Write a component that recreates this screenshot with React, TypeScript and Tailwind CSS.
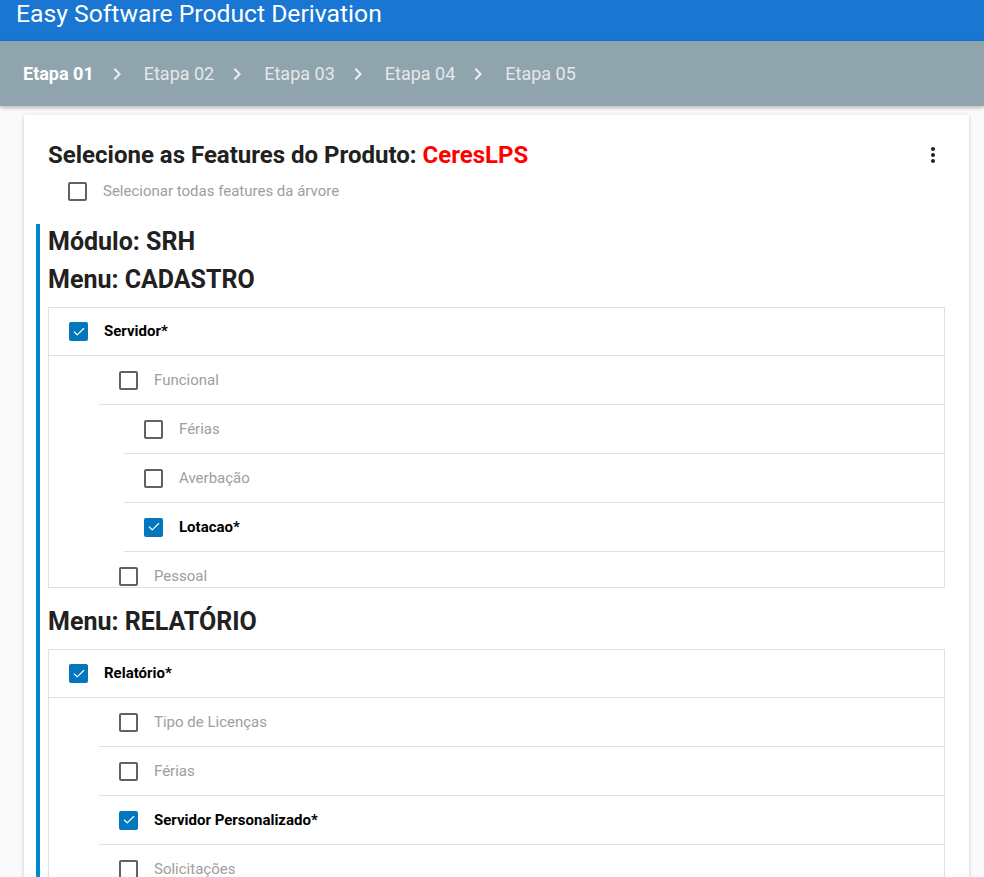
import { Check } from "lucide-react";

type Node = {
  label: string;
  checked?: boolean;
  indent: number;
};

const cadastro: Node[] = [
  { label: "Servidor*", checked: true, indent: 0 },
  { label: "Funcional", indent: 50 },
  { label: "Férias", indent: 75 },
  { label: "Averbação", indent: 75 },
  { label: "Lotacao*", checked: true, indent: 75 },
  { label: "Pessoal", indent: 50 },
];

const relatorio: Node[] = [
  { label: "Relatório*", checked: true, indent: 0 },
  { label: "Tipo de Licenças", indent: 50 },
  { label: "Férias", indent: 50 },
  { label: "Servidor Personalizado*", checked: true, indent: 50 },
  { label: "Solicitações", indent: 50 },
];

const steps = ["Etapa 01", "Etapa 02", "Etapa 03", "Etapa 04", "Etapa 05"];

function Box({ checked }: { checked?: boolean }) {
  if (checked) {
    return (
      <span className="flex h-[19px] w-[19px] shrink-0 items-center justify-center rounded-[2px] bg-[#0277bd]">
        <Check className="h-[14px] w-[14px] text-white" strokeWidth={2} />
      </span>
    );
  }
  return <span className="h-[19px] w-[19px] shrink-0 rounded-[2px] border-2 border-[#616161]" />;
}

function Row({ node }: { node: Node }) {
  return (
    <div
      className={
        node.indent === 0
          ? "flex h-[48px] items-center border-b border-[#e0e0e0] pl-[20px]"
          : node.indent === 50
            ? "ml-[50px] flex h-[49px] items-center border-b border-[#e0e0e0] pl-[20px]"
            : "ml-[75px] flex h-[49px] items-center border-b border-[#e0e0e0] pl-[20px]"
      }
    >
      <Box checked={node.checked} />
      <span
        className={
          node.checked
            ? "ml-[16px] text-[15px] font-bold text-black"
            : "ml-[16px] text-[15px] text-[#9e9e9e]"
        }
      >
        {node.label}
      </span>
    </div>
  );
}

function Tree({ nodes }: { nodes: Node[] }) {
  return (
    <div className="mr-[24px] h-[281px] overflow-hidden border border-[#e0e0e0] bg-white">
      {nodes.map((n, i) => (
        <Row key={i} node={n} />
      ))}
    </div>
  );
}

export default function App() {
  return (
    <div className="min-h-[877px] overflow-hidden bg-[#fafafa] font-['Roboto',sans-serif]">
      <header className="flex h-[41px] items-end bg-[#1976d2] px-[16px] pb-[14px]">
        <span className="text-[24.7px] leading-none text-white">Easy Software Product Derivation</span>
      </header>
      <nav className="flex h-[65px] items-center bg-[#90a4ae] pl-[23px] shadow-[0_2px_4px_rgba(0,0,0,0.25)]">
        {steps.map((s, i) => (
          <div key={s} className="flex items-center">
            {i > 0 && (
              <svg viewBox="0 0 24 24" className="ml-[11px] mr-[15px] h-[24px] w-[24px] fill-[#eceff1]">
                <path d="M10 6 8.59 7.41 13.17 12l-4.58 4.59L10 18l6-6z" />
              </svg>
            )}
            <span className={i === 0 ? "text-[18px] font-bold text-white" : "text-[18px] text-[#e3e8eb]"}>
              {s}
            </span>
          </div>
        ))}
      </nav>
      <main className="pl-[24px] pr-[15px] pt-[9px]">
        <section className="min-h-[800px] bg-white pb-[24px] shadow-[0_1px_4px_rgba(0,0,0,0.2)]">
          <div className="flex items-center justify-between pl-[24px] pr-[24px] pt-[24px]">
            <h2 className="text-[24px] font-bold leading-[32px] text-[#212121]">
              Selecione as Features do Produto: <span className="text-[#ff0000]">CeresLPS</span>
            </h2>
            <svg viewBox="0 0 24 24" className="h-[24px] w-[24px] fill-[#212121]">
              <path d="M12 8c1.1 0 2-.9 2-2s-.9-2-2-2-2 .9-2 2 .9 2 2 2zm0 2c-1.1 0-2 .9-2 2s.9 2 2 2 2-.9 2-2-.9-2-2-2zm0 6c-1.1 0-2 .9-2 2s.9 2 2 2 2-.9 2-2-.9-2-2-2z" />
            </svg>
          </div>
          <label className="flex h-[40px] items-center pl-[44px]">
            <Box />
            <span className="ml-[16px] text-[15px] text-[#9e9e9e]">Selecionar todas features da árvore</span>
          </label>
          <div className="ml-[12px] mt-[13px] border-l-4 border-[#0288d1] pl-[8px] pt-[2px]">
            <h3 className="text-[25px] font-bold leading-[32px] text-[#212121]">Módulo: SRH</h3>
            <h3 className="mt-[6px] text-[25px] font-bold leading-[32px] text-[#212121]">Menu: CADASTRO</h3>
            <div className="mt-[11px]">
              <Tree nodes={cadastro} />
            </div>
            <h3 className="mt-[18px] text-[25px] font-bold leading-[32px] text-[#212121]">Menu: RELATÓRIO</h3>
            <div className="mt-[11px]">
              <Tree nodes={relatorio} />
            </div>
          </div>
        </section>
      </main>
    </div>
  );
}
